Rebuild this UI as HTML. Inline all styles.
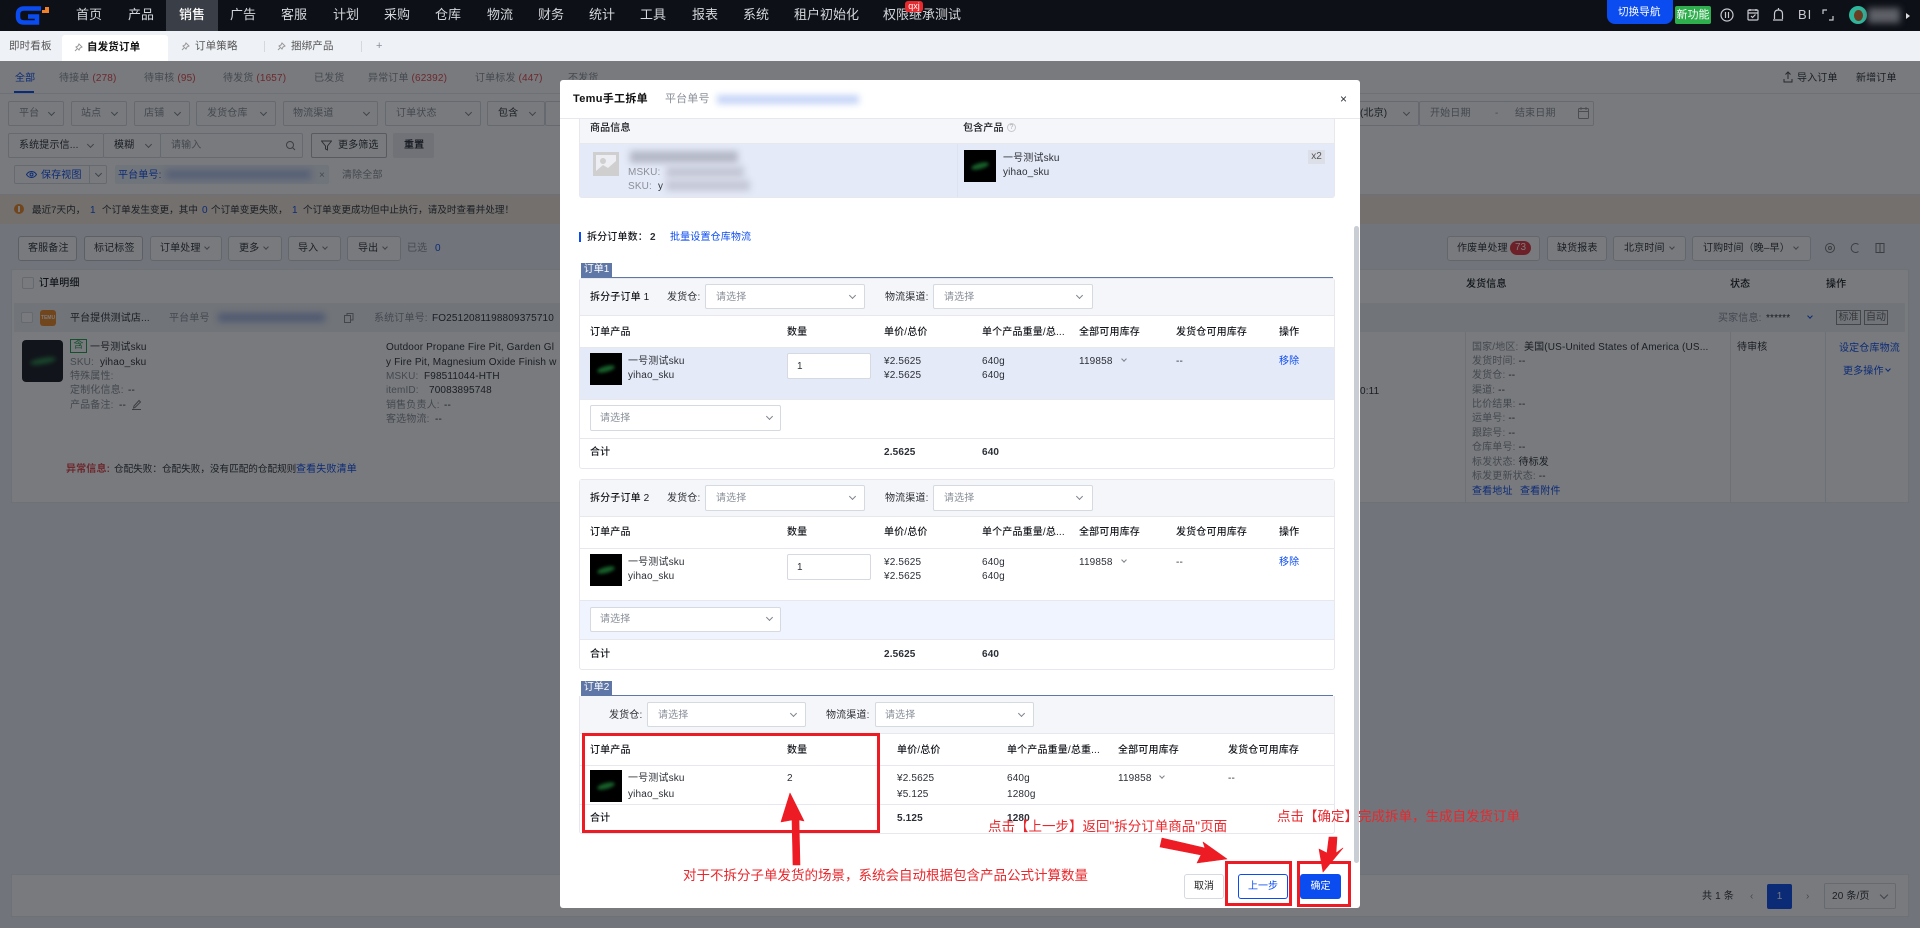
<!DOCTYPE html>
<html lang="zh"><head><meta charset="utf-8"><title>Temu手工拆单</title>
<style>
*{box-sizing:border-box}
html,body{margin:0;padding:0;width:1920px;height:928px;overflow:hidden;background:#f0f2f7;font-family:"Liberation Sans","Noto Sans CJK SC",sans-serif}
.a{position:absolute}
.t{position:absolute;white-space:nowrap;font-size:10px;line-height:14px;height:14px;margin-top:1px;color:#2b2f36;letter-spacing:.15px}
.c{font-size:9.6px;letter-spacing:0}
.g{color:#8a8f99}.b{color:#0b4cf0}.r{color:#e5484d}.w{font-weight:700}.m{font-weight:500;color:#14171c}
.s{position:absolute;background:#fff;border:1px solid #d5d9e0;border-radius:2px}
.cv{position:absolute;width:5px;height:5px;border-right:1px solid #7d828b;border-bottom:1px solid #7d828b;transform:rotate(45deg)}
.bl{position:absolute;filter:blur(3.5px)}
.th{position:absolute;width:32px;height:32px;background:#000;overflow:hidden}
.th:after{content:"";position:absolute;left:7px;top:13px;width:18px;height:6px;border-radius:50%;background:#17602a;transform:rotate(-15deg);filter:blur(1.5px)}
.n{position:absolute;top:8px;color:#d4d7dc;font-size:13px;line-height:14px;white-space:nowrap}
.btn{position:absolute;background:#fff;border:1px solid #d5d9e0;border-radius:3px}
.l{position:absolute;background:#e6e8ee}
.rb{position:absolute;border:3px solid #ed1c24}
.an{position:absolute;white-space:nowrap;color:#e8282d;font-size:13.5px;line-height:16px;height:16px}
.p{position:absolute}
</style></head><body>

<!-- page under mask -->
<div class="a" style="left:0;top:61px;width:1920px;height:133px;background:#fff"></div>
<div class="a" style="left:0;top:93px;width:1920px;height:1px;background:#e6e8ee"></div>
<div class="a" style="left:0;top:194px;width:1920px;height:1px;background:#e6e8ee"></div>
<div class="a" style="left:0;top:195px;width:1920px;height:29px;background:#f4e9dc"></div>
<div class="a" style="left:14px;top:91px;width:20px;height:2px;background:#0b4cf0"></div>

<div class="t b" style="left:15px;top:71px">全部</div>
<div class="t g" style="left:59px;top:71px">待接单 <span class="r">(278)</span></div>
<div class="t g" style="left:144px;top:71px">待审核 <span class="r">(95)</span></div>
<div class="t g" style="left:223px;top:71px">待发货 <span class="r">(1657)</span></div>
<div class="t g" style="left:314px;top:71px">已发货</div>
<div class="t g" style="left:368px;top:71px">异常订单 <span class="r">(62392)</span></div>
<div class="t g" style="left:475px;top:71px">订单标发 <span class="r">(447)</span></div>
<div class="t g" style="left:568px;top:71px">不发货</div>
<div class="t" style="left:1797px;top:71px">导入订单</div>
<div class="t" style="left:1856px;top:71px">新增订单</div>
<svg class="a" style="left:1783px;top:71px" width="10" height="12" fill="none" stroke="#444" stroke-width="1"><path d="M5 8V1M2.5 3.500L5 1l2.500 2.500M1 8v3h8V8"/></svg>

<!-- filter row 1 -->
<div class="s" style="left:8px;top:101px;width:56px;height:25px"></div><div class="t g" style="left:19px;top:106px">平台</div><div class="cv" style="left:49px;top:110px"></div>
<div class="s" style="left:71px;top:101px;width:56px;height:25px"></div><div class="t g" style="left:81px;top:106px">站点</div><div class="cv" style="left:112px;top:110px"></div>
<div class="s" style="left:134px;top:101px;width:56px;height:25px"></div><div class="t g" style="left:144px;top:106px">店铺</div><div class="cv" style="left:175px;top:110px"></div>
<div class="s" style="left:196px;top:101px;width:80px;height:25px"></div><div class="t g" style="left:207px;top:106px">发货仓库</div><div class="cv" style="left:261px;top:110px"></div>
<div class="s" style="left:283px;top:101px;width:95px;height:25px"></div><div class="t g" style="left:293px;top:106px">物流渠道</div><div class="cv" style="left:364px;top:110px"></div>
<div class="s" style="left:385px;top:101px;width:96px;height:25px"></div><div class="t g" style="left:396px;top:106px">订单状态</div><div class="cv" style="left:466px;top:110px"></div>
<div class="s" style="left:487px;top:101px;width:58px;height:25px"></div><div class="t" style="left:498px;top:106px">包含</div><div class="cv" style="left:530px;top:110px"></div>
<div class="s" style="left:545px;top:101px;width:60px;height:25px"></div>
<div class="s" style="left:1340px;top:101px;width:79px;height:25px"></div><div class="t" style="left:1360px;top:106px">(北京)</div><div class="cv" style="left:1404px;top:110px"></div>
<div class="s" style="left:1419px;top:101px;width:175px;height:25px"></div>
<div class="t g" style="left:1430px;top:106px">开始日期</div><div class="t g" style="left:1495px;top:106px">-</div><div class="t g" style="left:1515px;top:106px">结束日期</div>
<svg class="a" style="left:1578px;top:107px" width="11" height="12" fill="none" stroke="#999"><rect x=".5" y="1.500" width="10" height="10" rx="1"/><path d="M.5 4.500h10M3 0v3M8 0v3"/></svg>

<!-- filter row 2 -->
<div class="s" style="left:8px;top:133px;width:96px;height:25px"></div><div class="t" style="left:19px;top:138px">系统提示信...</div><div class="cv" style="left:88px;top:142px"></div>
<div class="s" style="left:103px;top:133px;width:58px;height:25px"></div><div class="t" style="left:114px;top:138px">模糊</div><div class="cv" style="left:146px;top:142px"></div>
<div class="s" style="left:160px;top:133px;width:143px;height:25px"></div><div class="t g" style="left:171px;top:138px">请输入</div>
<svg class="a" style="left:285px;top:140px" width="11" height="11" fill="none" stroke="#777"><circle cx="5" cy="5" r="3.500"/><path d="M7.600 7.600L10 10"/></svg>
<div class="s" style="left:311px;top:133px;width:76px;height:25px;border-color:#b5b9c0"></div>
<svg class="a" style="left:321px;top:140px" width="11" height="11" fill="none" stroke="#555"><path d="M.5 1h10L6.500 6v4l-2-1V6z"/></svg>
<div class="t" style="left:338px;top:138px">更多筛选</div>
<div class="a" style="left:393px;top:133px;width:41px;height:25px;background:#ecedf1;border-radius:2px"></div><div class="t w" style="left:404px;top:138px">重置</div>

<!-- filter row 3 -->
<div class="s" style="left:14px;top:165px;width:93px;height:19px"></div><div class="a" style="left:89px;top:165px;width:1px;height:19px;background:#d5d9e0"></div>
<svg class="a" style="left:26px;top:170px" width="11" height="9" fill="none" stroke="#0b4cf0"><path d="M.5 4.500C3 .5 8 .5 10.500 4.500 8 8.500 3 8.500 .5 4.500z"/><circle cx="5.500" cy="4.500" r="1.500"/></svg>
<div class="t b" style="left:41px;top:168px">保存视图</div><div class="cv" style="left:96px;top:171px"></div>
<div class="a" style="left:115px;top:165px;width:214px;height:19px;background:#edf1fa;border-radius:2px"></div>
<div class="t b" style="left:118px;top:168px">平台单号:</div>
<div class="bl" style="left:166px;top:170px;width:145px;height:9px;background:#b1c3ef"></div>
<div class="t g" style="left:319px;top:168px">×</div>
<div class="t g" style="left:342px;top:168px">清除全部</div>

<!-- alert -->
<div class="a" style="left:14px;top:204px;width:10px;height:10px;border-radius:50%;background:#f08a24"></div>
<div class="a" style="left:18px;top:206px;width:2px;height:6px;background:#fff"></div>
<div class="t c" style="left:32px;top:203px">最近7天内，</div>
<div class="t b" style="left:90px;top:203px">1</div>
<div class="t c" style="left:102px;top:203px">个订单发生变更，其中</div>
<div class="t b" style="left:202px;top:203px">0</div>
<div class="t c" style="left:211px;top:203px">个订单变更失败，</div>
<div class="t b" style="left:292px;top:203px">1</div>
<div class="t c" style="left:303px;top:203px">个订单变更成功但中止执行，请及时查看并处理！</div>

<!-- toolbar -->
<div class="btn" style="left:18px;top:236px;width:59px;height:25px;border-color:#bfc3ca"></div><div class="t" style="left:28px;top:241px">客服备注</div>
<div class="btn" style="left:84px;top:236px;width:59px;height:25px;border-color:#bfc3ca"></div><div class="t" style="left:94px;top:241px">标记标签</div>
<div class="btn" style="left:150px;top:236px;width:72px;height:25px;border-color:#d0d3d9"></div><div class="t" style="left:160px;top:241px">订单处理</div><div class="cv" style="left:205px;top:245px;width:4px;height:4px"></div>
<div class="btn" style="left:228px;top:236px;width:54px;height:25px;border-color:#d0d3d9"></div><div class="t" style="left:239px;top:241px">更多</div><div class="cv" style="left:264px;top:245px;width:4px;height:4px"></div>
<div class="btn" style="left:288px;top:236px;width:53px;height:25px;border-color:#d0d3d9"></div><div class="t" style="left:298px;top:241px">导入</div><div class="cv" style="left:323px;top:245px;width:4px;height:4px"></div>
<div class="btn" style="left:347px;top:236px;width:54px;height:25px;border-color:#d0d3d9"></div><div class="t" style="left:358px;top:241px">导出</div><div class="cv" style="left:383px;top:245px;width:4px;height:4px"></div>
<div class="t g" style="left:407px;top:241px">已选</div><div class="t b" style="left:435px;top:241px">0</div>

<div class="btn" style="left:1447px;top:236px;width:93px;height:25px;border-color:#d0d3d9"></div><div class="t" style="left:1457px;top:241px">作废单处理</div>
<div class="a" style="left:1510px;top:241px;width:21px;height:14px;border-radius:7px;background:#e5343c;color:#fff;font-size:10px;line-height:14px;text-align:center">73</div>
<div class="btn" style="left:1547px;top:236px;width:60px;height:25px;border-color:#d0d3d9"></div><div class="t" style="left:1557px;top:241px">缺货报表</div>
<div class="btn" style="left:1613px;top:236px;width:73px;height:25px;border-color:#d0d3d9"></div><div class="t" style="left:1624px;top:241px">北京时间</div><div class="cv" style="left:1670px;top:245px;width:4px;height:4px"></div>
<div class="btn" style="left:1692px;top:236px;width:119px;height:25px;border-color:#d0d3d9"></div><div class="t" style="left:1703px;top:241px">订购时间（晚–早）</div><div class="cv" style="left:1794px;top:245px;width:4px;height:4px"></div>
<svg class="a" style="left:1825px;top:242px" width="10" height="12" fill="none" stroke="#777"><circle cx="5" cy="6" r="4.500"/><circle cx="5" cy="6" r="1.500"/></svg>
<svg class="a" style="left:1850px;top:242px" width="10" height="12" fill="none" stroke="#777"><path d="M8.500 2.500A4.500 4.500 0 1 0 8.500 9.500"/></svg>
<svg class="a" style="left:1875px;top:242px" width="10" height="12" fill="none" stroke="#777"><path d="M1 1.500h8v9H1zM5 1.500v9"/></svg>

<!-- table -->
<div class="a" style="left:11px;top:269px;width:1898px;height:234px;background:#fff;border:1px solid #e8eaef"></div>
<div class="s" style="left:22px;top:277px;width:12px;height:12px"></div>
<div class="t m" style="left:39px;top:276px">订单明细</div>
<div class="t m" style="left:1466px;top:277px">发货信息</div><div class="t m" style="left:1730px;top:277px">状态</div><div class="t m" style="left:1826px;top:277px">操作</div>
<div class="a" style="left:14px;top:303px;width:1891px;height:29px;background:#eff1f5"></div>
<div class="s" style="left:21px;top:312px;width:12px;height:11px"></div>
<div class="a" style="left:40px;top:310px;width:16px;height:16px;border-radius:3px;background:#f08a24;color:#fff;font-size:5px;line-height:16px;text-align:center;font-weight:700">TEMU</div>
<div class="t" style="left:70px;top:311px">平台提供测试店...</div>
<div class="t g" style="left:169px;top:311px">平台单号</div>
<div class="bl" style="left:218px;top:313px;width:107px;height:9px;background:#a4b6e4"></div>
<svg class="a" style="left:344px;top:313px" width="10" height="10" fill="none" stroke="#888"><path d="M3 2.500V.500h6v6.500H7"/><rect x=".5" y="2.500" width="6" height="7"/></svg>
<div class="t g" style="left:374px;top:311px">系统订单号:</div><div class="t" style="left:432px;top:311px">FO2512081198809375710</div>
<div class="a" style="left:22px;top:340px;width:41px;height:42px;border-radius:4px;background:#15181f"></div>
<div class="a" style="left:30px;top:358px;width:26px;height:6px;border-radius:50%;background:#2a8a48;filter:blur(2px);transform:rotate(-10deg)"></div>
<div class="a" style="left:70px;top:339px;width:17px;height:14px;border:1px solid #1f9d4d;color:#1f9d4d;font-size:10px;line-height:12px;text-align:center">含</div>
<div class="t" style="left:90px;top:340px">一号测试sku</div>
<div class="t g" style="left:70px;top:355px">SKU:</div><div class="t" style="left:100px;top:355px">yihao_sku</div>
<div class="t g" style="left:70px;top:369px">特殊属性:</div>
<div class="t g" style="left:70px;top:383px">定制化信息:</div><div class="t" style="left:128px;top:383px">--</div>
<div class="t g" style="left:70px;top:398px">产品备注:</div><div class="t" style="left:119px;top:398px">--</div>
<svg class="a" style="left:131px;top:399px" width="11" height="11" fill="none" stroke="#777"><path d="M3 7L8 1.500l1.500 1.500L4 8.500 2.500 9zM1 10.500h9"/></svg>
<div class="t" style="left:386px;top:340px">Outdoor Propane Fire Pit, Garden Gl</div>
<div class="t" style="left:386px;top:355px">y Fire Pit, Magnesium Oxide Finish w</div>
<div class="t g" style="left:386px;top:369px">MSKU:</div><div class="t" style="left:424px;top:369px">F98511044-HTH</div>
<div class="t g" style="left:386px;top:383px">itemID:</div><div class="t" style="left:429px;top:383px">70083895748</div>
<div class="t g" style="left:386px;top:398px">销售负责人:</div><div class="t" style="left:444px;top:398px">--</div>
<div class="t g" style="left:386px;top:412px">客选物流:</div><div class="t" style="left:435px;top:412px">--</div>
<div class="t r w" style="left:66px;top:462px">异常信息:</div>
<div class="t c" style="left:114px;top:462px">仓配失败：仓配失败，没有匹配的仓配规则</div>
<div class="t b" style="left:296px;top:462px">查看失败清单</div>
<div class="t" style="left:1360px;top:384px">0:11</div>
<div class="a" style="left:1465px;top:332px;width:1px;height:170px;background:#e6e8ee"></div>
<div class="a" style="left:1730px;top:332px;width:1px;height:170px;background:#e6e8ee"></div>
<div class="a" style="left:1825px;top:332px;width:1px;height:170px;background:#e6e8ee"></div>
<div class="t g" style="left:1718px;top:311px">买家信息:</div><div class="t" style="left:1766px;top:311px">******</div><div class="cv" style="left:1808px;top:314px;width:4px;height:4px;border-color:#0b4cf0"></div>
<div class="a" style="left:1836px;top:310px;width:25px;height:15px;border:1px solid #888;color:#666;font-size:10px;line-height:13px;text-align:center">标准</div>
<div class="a" style="left:1864px;top:310px;width:24px;height:15px;border:1px solid #888;color:#666;font-size:10px;line-height:13px;text-align:center">自动</div>
<div class="t g" style="left:1472px;top:340px">国家/地区:</div><div class="t" style="left:1524px;top:340px">美国(US-United States of America (US...</div>
<div class="t g" style="left:1472px;top:354px">发货时间: <span style="color:#2b2f36">--</span></div>
<div class="t g" style="left:1472px;top:368px">发货仓: <span style="color:#2b2f36">--</span></div>
<div class="t g" style="left:1472px;top:383px">渠道: <span style="color:#2b2f36">--</span></div>
<div class="t g" style="left:1472px;top:397px">比价结果: <span style="color:#2b2f36">--</span></div>
<div class="t g" style="left:1472px;top:411px">运单号: <span style="color:#2b2f36">--</span></div>
<div class="t g" style="left:1472px;top:426px">跟踪号: <span style="color:#2b2f36">--</span></div>
<div class="t g" style="left:1472px;top:440px">仓库单号: <span style="color:#2b2f36">--</span></div>
<div class="t g" style="left:1472px;top:455px">标发状态: <span style="color:#2b2f36">待标发</span></div>
<div class="t g" style="left:1472px;top:469px">标发更新状态: <span style="color:#2b2f36">--</span></div>
<div class="t b" style="left:1472px;top:484px">查看地址</div><div class="t b" style="left:1520px;top:484px">查看附件</div>
<div class="t" style="left:1737px;top:340px">待审核</div>
<div class="t b" style="left:1839px;top:341px">设定仓库物流</div>
<div class="t b" style="left:1843px;top:364px">更多操作</div><div class="cv" style="left:1886px;top:367px;width:4px;height:4px;border-color:#0b4cf0"></div>

<!-- pagination -->
<div class="a" style="left:11px;top:874px;width:1898px;height:43px;background:#fff;border:1px solid #e8eaef"></div>
<div class="t" style="left:1702px;top:889px">共 1 条</div>
<div class="t g" style="left:1750px;top:889px">‹</div>
<div class="a" style="left:1767px;top:884px;width:25px;height:25px;border-radius:2px;background:#0b4cf0;color:#fff;font-size:10px;line-height:25px;text-align:center">1</div>
<div class="t g" style="left:1806px;top:889px">›</div>
<div class="s" style="left:1824px;top:883px;width:72px;height:26px"></div><div class="t" style="left:1832px;top:889px">20 条/页</div><div class="cv" style="left:1881px;top:892px;width:6px;height:6px"></div>

<!-- mask -->
<div class="a" style="left:0;top:61px;width:1920px;height:867px;background:rgba(14,18,24,.56)"></div>

<!-- top nav -->
<div class="a" style="left:0;top:0;width:1920px;height:31px;background:#0d1016"></div>
<div class="a" style="left:166px;top:0;width:52px;height:31px;background:#3a3e46"></div>
<svg class="a" style="left:14px;top:4px" width="36" height="22"><path d="M27 4.500H10Q4 4.500 4 10.500v2Q4 18.500 10 18.500h13V12.500H14" fill="none" stroke="#0b4cf0" stroke-width="4.500"/><path d="M31 3h4v6h-7V6h3z" fill="#f0802a"/></svg>
<div class="n" style="left:76px">首页</div><div class="n" style="left:128px">产品</div><div class="n" style="left:179px;color:#fff;font-weight:500">销售</div><div class="n" style="left:230px">广告</div><div class="n" style="left:281px">客服</div><div class="n" style="left:333px">计划</div><div class="n" style="left:384px">采购</div><div class="n" style="left:435px">仓库</div><div class="n" style="left:487px">物流</div><div class="n" style="left:538px">财务</div><div class="n" style="left:589px">统计</div><div class="n" style="left:640px">工具</div><div class="n" style="left:692px">报表</div><div class="n" style="left:743px">系统</div><div class="n" style="left:794px">租户初始化</div><div class="n" style="left:883px">权限继承测试</div>
<div class="a" style="left:905px;top:1px;width:18px;height:11px;background:#e8282d;border-radius:3px;color:#fff;font-size:9px;line-height:10px;text-align:center">qxj</div>
<div class="a" style="left:1607px;top:0;width:66px;height:24px;background:#0b4cf0;border-radius:0 0 8px 8px"></div>
<div class="t" style="left:1618px;top:5px;color:#fff;font-size:10.500px;margin-top:0">切换导航</div>
<div class="a" style="left:1675px;top:6px;width:36px;height:18px;background:#2fae4e;border-radius:2px;color:#fff;font-size:11px;line-height:18px;text-align:center;white-space:nowrap">新功能</div>
<svg class="a" style="left:1720px;top:6px" width="120" height="19" fill="none" stroke="#c8cad0" stroke-width="1.200"><circle cx="7" cy="9" r="6"/><path d="M5.500 6v6M8.500 6v6"/><rect x="28" y="4" width="10" height="10" rx="1"/><path d="M28 7h10M30 3v2M36 3v2M31 10l1.500 1.500 3-3"/><path d="M53 14h10M54.500 13V8q0-4 4-4t4 4v5M58.500 2v2"/><path d="M103 8V4h4M113 10v4h-4"/></svg>
<div class="a" style="left:1798px;top:8px;color:#c8cad0;font-size:13px;line-height:14px;letter-spacing:1px">BI</div>
<div class="a" style="left:1849px;top:6px;width:18px;height:18px;border-radius:50%;background:#2fb59b"></div>
<div class="a" style="left:1854px;top:10px;width:9px;height:11px;border-radius:50%;background:#6b3d22"></div>
<div class="bl" style="left:1868px;top:8px;width:32px;height:15px;background:#5f6168"></div>
<div class="a" style="left:1906px;top:13px;width:0;height:0;border-left:4px solid #ddd;border-top:3px solid transparent;border-bottom:3px solid transparent"></div>

<!-- tab bar -->
<div class="a" style="left:0;top:31px;width:1920px;height:30px;background:#eef1f5"></div>
<div class="a" style="left:62px;top:35px;width:106px;height:26px;background:#fff;border-radius:3px 3px 0 0"></div>
<div class="t" style="left:9px;top:38px;font-size:10.500px;color:#555">即时看板</div>
<div class="t" style="left:87px;top:39px;font-size:10.500px;font-weight:700;color:#111">自发货订单</div>
<svg class="p" style="left:74px;top:43px" width="9" height="9" fill="none" stroke="#999"><path d="M5 1l3 3-2 1-1 2-3-3 2-1zM3 6L1 8"/></svg>
<svg class="p" style="left:181px;top:42px" width="9" height="9" fill="none" stroke="#999"><path d="M5 1l3 3-2 1-1 2-3-3 2-1zM3 6L1 8"/></svg>
<div class="t" style="left:195px;top:38px;font-size:10.500px;color:#555">订单策略</div>
<div class="a" style="left:264px;top:41px;width:1px;height:11px;background:#d5d8de"></div>
<svg class="p" style="left:277px;top:42px" width="9" height="9" fill="none" stroke="#999"><path d="M5 1l3 3-2 1-1 2-3-3 2-1zM3 6L1 8"/></svg>
<div class="t" style="left:291px;top:38px;font-size:10.500px;color:#555">捆绑产品</div>
<div class="a" style="left:361px;top:41px;width:1px;height:11px;background:#d5d8de"></div>
<div class="t g" style="left:376px;top:38px;font-size:11px">+</div>

<!-- modal -->
<div class="a" style="left:560px;top:80px;width:800px;height:828px;background:#fff;border-radius:3px"></div>
<div class="a" style="left:560px;top:118px;width:800px;height:1px;background:#e6e8ee"></div>
<div class="t w" style="left:573px;top:91px;font-size:11px;letter-spacing:.3px;color:#111">Temu手工拆单</div>
<div class="t g" style="left:665px;top:91px;font-size:11px">平台单号</div>
<div class="bl" style="left:717px;top:95px;width:142px;height:9px;background:#c5d4f7"></div>
<div class="t" style="left:1340px;top:91px;font-size:12px">×</div>
<div class="a" style="left:1354px;top:226px;width:5px;height:637px;background:#c9cdd4;border-radius:3px"></div>

<!-- product info -->
<div class="a" style="left:579px;top:119px;width:756px;height:79px;border:1px solid #e6e8ee;border-top:0;border-radius:0 0 3px 3px;background:#e5eaf8"></div>
<div class="a" style="left:580px;top:119px;width:754px;height:25px;background:#f5f6f9;border-bottom:1px solid #e6e8ee"></div>
<div class="a" style="left:957px;top:144px;width:1px;height:53px;background:#dfe3ee"></div>
<div class="t m" style="left:590px;top:121px">商品信息</div>
<div class="t m" style="left:963px;top:121px">包含产品</div>
<div class="a" style="left:1007px;top:123px;width:9px;height:9px;border:1px solid #c5c8ce;border-radius:50%;color:#aaa;font-size:7px;line-height:7px;text-align:center">?</div>
<svg class="a" style="left:593px;top:152px" width="26" height="24"><rect width="26" height="24" fill="#cfcfcf"/><rect x="3" y="3" width="20" height="18" fill="#eceef3"/><circle cx="10" cy="9" r="3" fill="#cfcfcf"/><path d="M3 19l7-6 5 3 8-7v12H3z" fill="#cfcfcf"/></svg>
<div class="bl" style="left:630px;top:151px;width:108px;height:12px;background:#b4b8c6"></div>
<div class="t" style="left:628px;top:165px;color:#8a8f99">MSKU:</div>
<div class="bl" style="left:666px;top:166px;width:78px;height:12px;background:#c4c8d6"></div>
<div class="t" style="left:628px;top:179px;color:#8a8f99">SKU:</div><div class="t" style="left:658px;top:179px">y</div>
<div class="bl" style="left:666px;top:180px;width:84px;height:11px;background:#c4c8d6"></div>
<div class="th" style="left:964px;top:150px"></div>
<div class="t" style="left:1003px;top:151px">一号测试sku</div><div class="t" style="left:1003px;top:165px">yihao_sku</div>
<div class="a" style="left:1308px;top:150px;width:17px;height:14px;background:#dcdfe8;color:#555;font-size:10px;line-height:14px;text-align:center">x2</div>

<div class="a" style="left:579px;top:232px;width:2px;height:10px;background:#0b4cf0"></div>
<div class="t m" style="left:587px;top:230px">拆分订单数：</div><div class="t w" style="left:650px;top:230px">2</div>
<div class="t b" style="left:670px;top:230px">批量设置仓库物流</div>

<!-- order 1 -->
<div class="a" style="left:581px;top:263px;width:31px;height:14px;background:#5f77a6;color:#fff;font-size:10px;line-height:14px;text-align:center">订单1</div>
<div class="a" style="left:581px;top:277px;width:752px;height:1px;background:#5f77a6"></div>
<div class="a" style="left:579px;top:278px;width:756px;height:191px;border:1px solid #e6e8ee;border-radius:3px"></div>
<div class="a" style="left:580px;top:279px;width:754px;height:36px;background:#f5f6f9"></div>
<div class="l" style="left:580px;top:315px;width:754px;height:1px"></div>
<div class="t m" style="left:590px;top:290px">拆分子订单 1</div>
<div class="t" style="left:667px;top:290px">发货仓:</div>
<div class="s" style="left:705px;top:284px;width:160px;height:25px"></div><div class="t g" style="left:716px;top:290px">请选择</div><div class="cv" style="left:850px;top:293px"></div>
<div class="t" style="left:885px;top:290px">物流渠道:</div>
<div class="s" style="left:933px;top:284px;width:160px;height:25px"></div><div class="t g" style="left:944px;top:290px">请选择</div><div class="cv" style="left:1077px;top:293px"></div>
<div class="t m" style="left:590px;top:325px">订单产品</div><div class="t m" style="left:787px;top:325px">数量</div><div class="t m" style="left:884px;top:325px">单价/总价</div><div class="t m" style="left:982px;top:325px">单个产品重量/总...</div><div class="t m" style="left:1079px;top:325px">全部可用库存</div><div class="t m" style="left:1176px;top:325px">发货仓可用库存</div><div class="t m" style="left:1279px;top:325px">操作</div>
<div class="a" style="left:580px;top:347px;width:754px;height:52px;background:#e5eaf8;border-top:1px solid #e6e8ee"></div>
<div class="th" style="left:590px;top:353px"></div>
<div class="t" style="left:628px;top:354px">一号测试sku</div><div class="t" style="left:628px;top:368px">yihao_sku</div>
<div class="s" style="left:787px;top:353px;width:84px;height:26px"></div><div class="t" style="left:797px;top:359px">1</div>
<div class="t" style="left:884px;top:354px">¥2.5625</div><div class="t" style="left:884px;top:368px">¥2.5625</div>
<div class="t" style="left:982px;top:354px">640g</div><div class="t" style="left:982px;top:368px">640g</div>
<div class="t" style="left:1079px;top:354px">119858</div><div class="cv" style="left:1122px;top:357px;width:4px;height:4px"></div>
<div class="t" style="left:1176px;top:354px">--</div><div class="t b" style="left:1279px;top:354px">移除</div>
<div class="l" style="left:580px;top:399px;width:754px;height:1px"></div>
<div class="s" style="left:590px;top:405px;width:191px;height:26px"></div><div class="t g" style="left:600px;top:411px">请选择</div><div class="cv" style="left:767px;top:414px"></div>
<div class="l" style="left:580px;top:438px;width:754px;height:1px"></div>
<div class="t m" style="left:590px;top:445px">合计</div><div class="t w" style="left:884px;top:445px">2.5625</div><div class="t w" style="left:982px;top:445px">640</div>

<!-- sub order 2 -->
<div class="a" style="left:579px;top:479px;width:756px;height:191px;border:1px solid #e6e8ee;border-radius:3px"></div>
<div class="a" style="left:580px;top:480px;width:754px;height:36px;background:#f5f6f9"></div>
<div class="l" style="left:580px;top:516px;width:754px;height:1px"></div>
<div class="t m" style="left:590px;top:491px">拆分子订单 2</div>
<div class="t" style="left:667px;top:491px">发货仓:</div>
<div class="s" style="left:705px;top:485px;width:160px;height:26px"></div><div class="t g" style="left:716px;top:491px">请选择</div><div class="cv" style="left:850px;top:494px"></div>
<div class="t" style="left:885px;top:491px">物流渠道:</div>
<div class="s" style="left:933px;top:485px;width:160px;height:26px"></div><div class="t g" style="left:944px;top:491px">请选择</div><div class="cv" style="left:1077px;top:494px"></div>
<div class="t m" style="left:590px;top:525px">订单产品</div><div class="t m" style="left:787px;top:525px">数量</div><div class="t m" style="left:884px;top:525px">单价/总价</div><div class="t m" style="left:982px;top:525px">单个产品重量/总...</div><div class="t m" style="left:1079px;top:525px">全部可用库存</div><div class="t m" style="left:1176px;top:525px">发货仓可用库存</div><div class="t m" style="left:1279px;top:525px">操作</div>
<div class="l" style="left:580px;top:548px;width:754px;height:1px"></div>
<div class="th" style="left:590px;top:554px"></div>
<div class="t" style="left:628px;top:555px">一号测试sku</div><div class="t" style="left:628px;top:569px">yihao_sku</div>
<div class="s" style="left:787px;top:554px;width:84px;height:26px"></div><div class="t" style="left:797px;top:560px">1</div>
<div class="t" style="left:884px;top:555px">¥2.5625</div><div class="t" style="left:884px;top:569px">¥2.5625</div>
<div class="t" style="left:982px;top:555px">640g</div><div class="t" style="left:982px;top:569px">640g</div>
<div class="t" style="left:1079px;top:555px">119858</div><div class="cv" style="left:1122px;top:558px;width:4px;height:4px"></div>
<div class="t" style="left:1176px;top:555px">--</div><div class="t b" style="left:1279px;top:555px">移除</div>
<div class="a" style="left:580px;top:600px;width:754px;height:40px;background:#eff4fe;border-top:1px solid #e6e8ee;border-bottom:1px solid #e6e8ee"></div>
<div class="s" style="left:590px;top:607px;width:191px;height:25px"></div><div class="t g" style="left:600px;top:612px">请选择</div><div class="cv" style="left:767px;top:615px"></div>
<div class="t m" style="left:590px;top:647px">合计</div><div class="t w" style="left:884px;top:647px">2.5625</div><div class="t w" style="left:982px;top:647px">640</div>

<!-- order 2 -->
<div class="a" style="left:581px;top:681px;width:31px;height:14px;background:#5f77a6;color:#fff;font-size:10px;line-height:14px;text-align:center">订单2</div>
<div class="a" style="left:581px;top:695px;width:752px;height:1px;background:#5f77a6"></div>
<div class="a" style="left:579px;top:696px;width:756px;height:138px;border:1px solid #e6e8ee;border-top:0;border-radius:0 0 3px 3px"></div>
<div class="a" style="left:580px;top:696px;width:754px;height:37px;background:#f5f6f9"></div>
<div class="l" style="left:580px;top:733px;width:754px;height:1px"></div>
<div class="t" style="left:609px;top:708px">发货仓:</div>
<div class="s" style="left:647px;top:702px;width:159px;height:25px"></div><div class="t g" style="left:658px;top:708px">请选择</div><div class="cv" style="left:791px;top:711px"></div>
<div class="t" style="left:826px;top:708px">物流渠道:</div>
<div class="s" style="left:875px;top:702px;width:159px;height:25px"></div><div class="t g" style="left:885px;top:708px">请选择</div><div class="cv" style="left:1019px;top:711px"></div>
<div class="t m" style="left:590px;top:743px">订单产品</div><div class="t m" style="left:787px;top:743px">数量</div><div class="t m" style="left:897px;top:743px">单价/总价</div><div class="t m" style="left:1007px;top:743px">单个产品重量/总重...</div><div class="t m" style="left:1118px;top:743px">全部可用库存</div><div class="t m" style="left:1228px;top:743px">发货仓可用库存</div>
<div class="l" style="left:580px;top:765px;width:754px;height:1px"></div>
<div class="th" style="left:590px;top:770px"></div>
<div class="t" style="left:628px;top:771px">一号测试sku</div><div class="t" style="left:628px;top:787px">yihao_sku</div>
<div class="t" style="left:787px;top:771px">2</div>
<div class="t" style="left:897px;top:771px">¥2.5625</div><div class="t" style="left:897px;top:787px">¥5.125</div>
<div class="t" style="left:1007px;top:771px">640g</div><div class="t" style="left:1007px;top:787px">1280g</div>
<div class="t" style="left:1118px;top:771px">119858</div><div class="cv" style="left:1160px;top:774px;width:4px;height:4px"></div>
<div class="t" style="left:1228px;top:771px">--</div>
<div class="l" style="left:580px;top:804px;width:754px;height:1px"></div>
<div class="t m" style="left:590px;top:811px">合计</div><div class="t w" style="left:897px;top:811px">5.125</div><div class="t w" style="left:1007px;top:811px">1280</div>

<!-- footer buttons -->
<div class="btn" style="left:1184px;top:874px;width:40px;height:25px;color:#222;font-size:10px;line-height:23px;text-align:center">取消</div>
<div class="btn" style="left:1238px;top:874px;width:50px;height:25px;border-color:#0b4cf0;color:#0b4cf0;font-size:10px;line-height:23px;text-align:center">上一步</div>
<div class="a" style="left:1300px;top:874px;width:41px;height:25px;background:#0b4cf0;border-radius:3px;color:#fff;font-size:10px;line-height:25px;text-align:center">确定</div>

<!-- annotations -->
<div class="rb" style="left:582px;top:733px;width:298px;height:100px"></div>
<div class="rb" style="left:1225px;top:861px;width:67px;height:45px"></div>
<div class="rb" style="left:1297px;top:861px;width:54px;height:46px"></div>
<svg class="a" style="left:0;top:0;pointer-events:none" width="1920" height="928" fill="#ed1c24" stroke="#ed1c24" stroke-width=".6" stroke-linejoin="round">
<polygon points="790,793 804,821 799,820 800,865 793,865 792,820 781,822"/>
<polygon points="1227,859 1197,863 1201,855 1160,847 1162,838 1205,848 1203,842"/>
<polygon points="1323,872 1319,849 1327,853 1329,837 1337,837 1336,853 1343,848"/>
</svg>
<div class="an" style="left:683px;top:868px">对于不拆分子单发货的场景，系统会自动根据包含产品公式计算数量</div>
<div class="an" style="left:988px;top:819px">点击【上一步】返回"拆分订单商品"页面</div>
<div class="an" style="left:1277px;top:809px">点击【确定】完成拆单，生成自发货订单</div>
</body></html>
